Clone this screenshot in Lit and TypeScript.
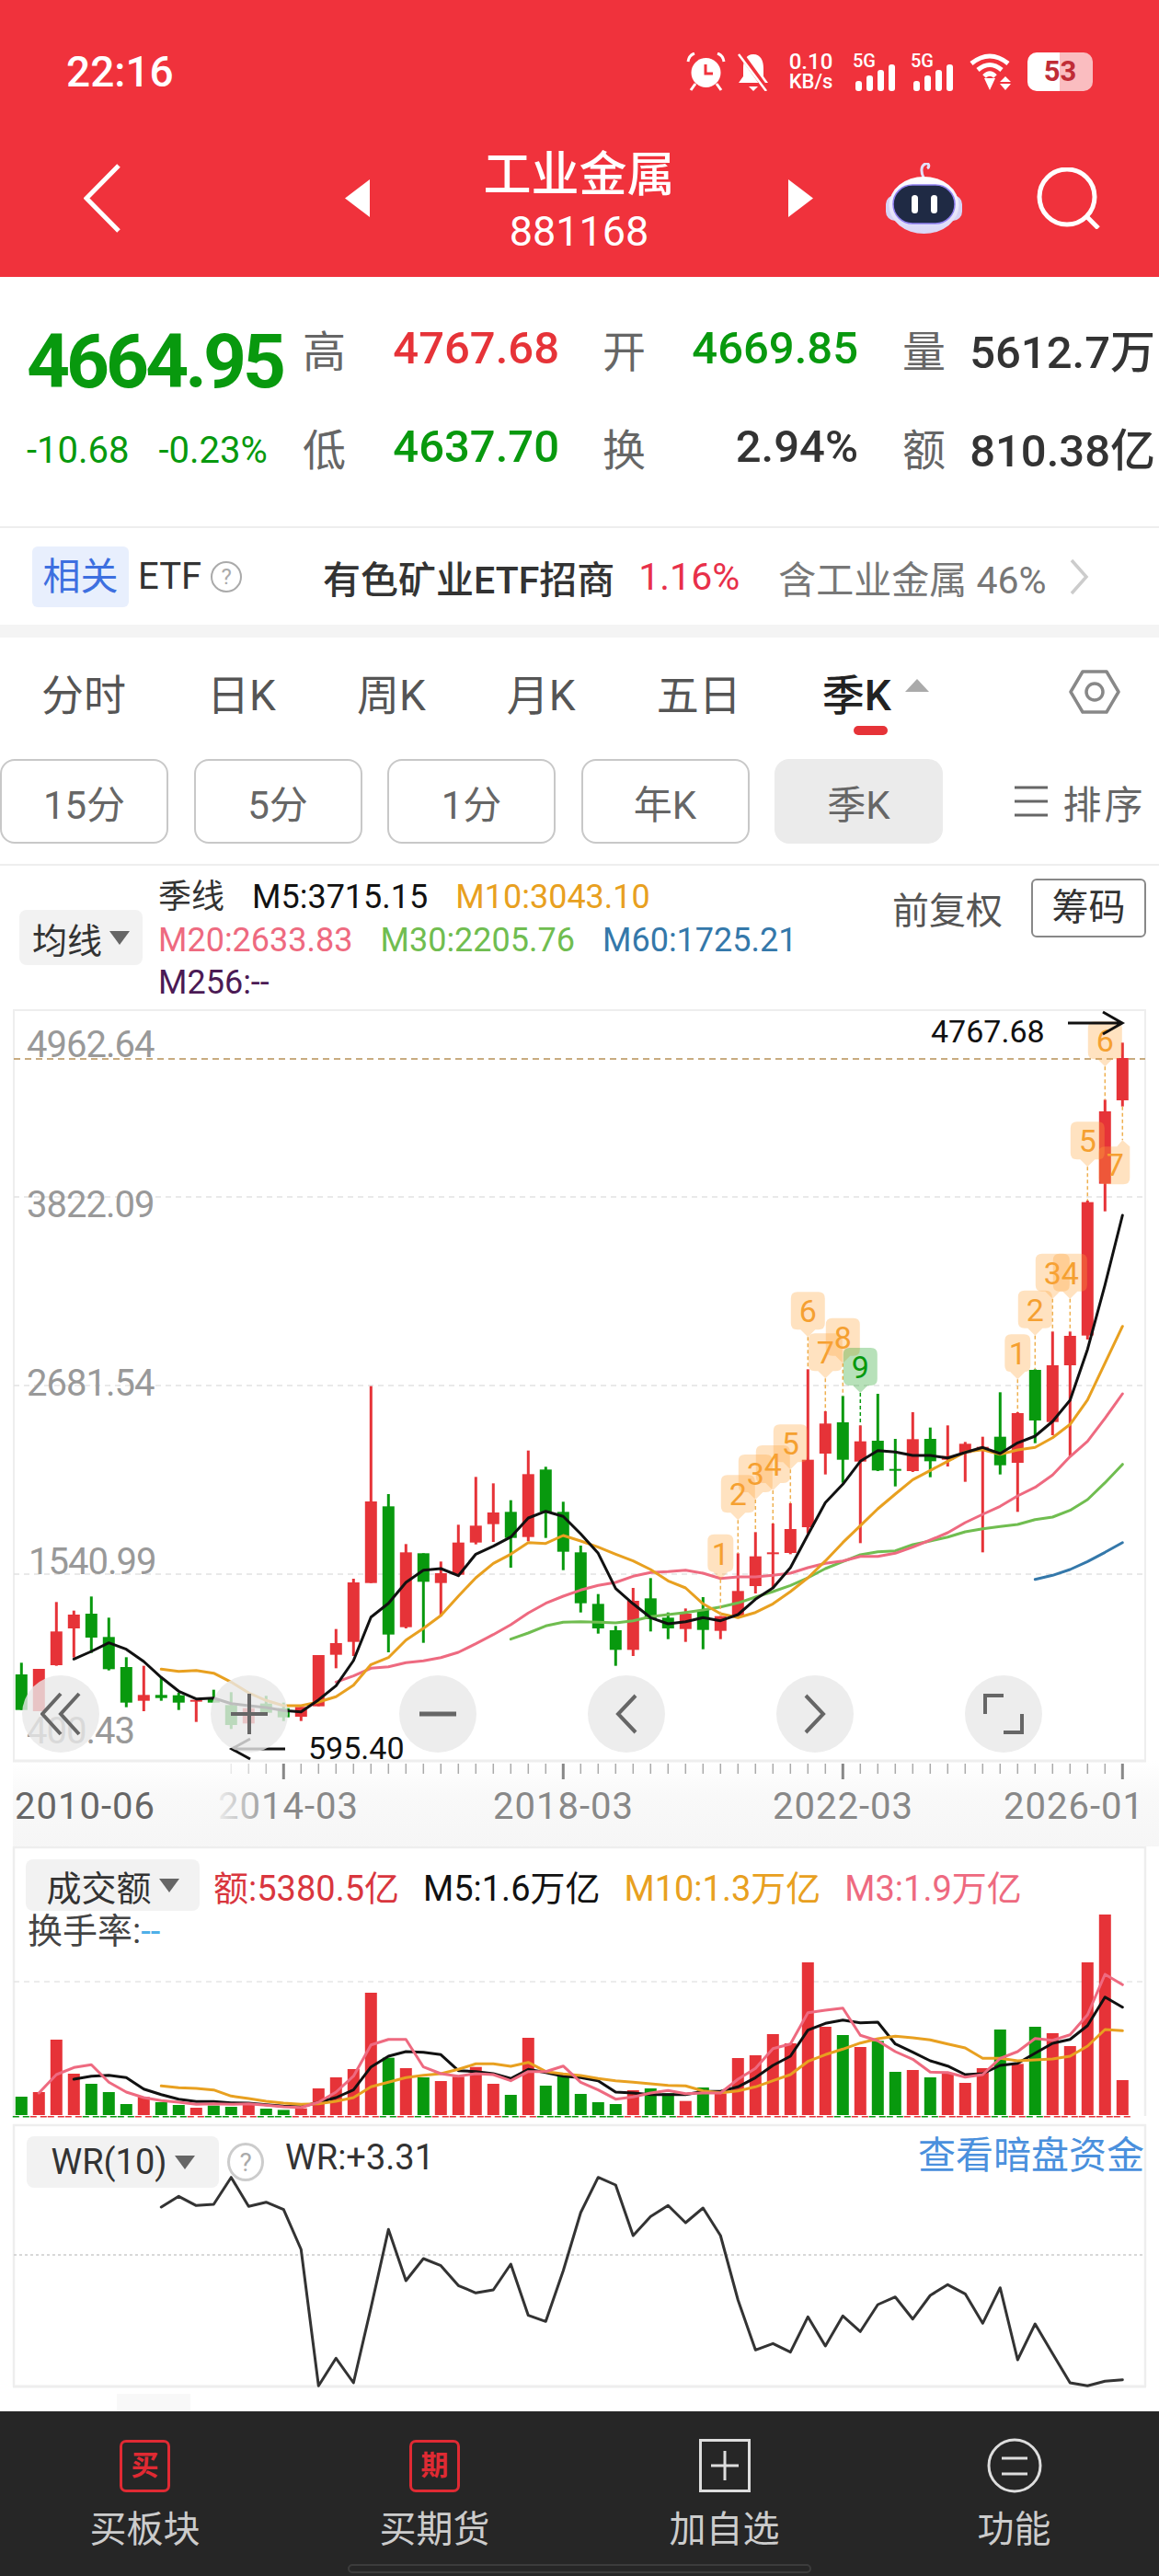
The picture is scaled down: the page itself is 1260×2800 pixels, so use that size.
import {LitElement, html, svg, css} from 'lit';
import {customElement} from 'lit/decorators.js';

const RED = '#e63338';
const GREEN = '#08990e';
const ORANGE = '#e8a020';
const PINK = '#ee6a80';
const LIME = '#70bd50';
const BLUE = '#3478aa';

// bar centres in the chart, one per quarter
const bx = (i: number) => 23.3 + 19 * i;
// price panel, volume panel and WR panel have their own vertical scales
const py = (v: number) => 1580 + v / 3;
const vy = (v: number) => 2000 + v / 3;
const wy = (v: number) => 2300 + v / 3;

// [high, body top, body bottom, low, rising]
const candles = [
  [682, 720, 836, 836, 0], [702, 702, 840, 840, 1], [484, 580, 690, 692, 1], [512, 525, 570, 665, 1],
  [466, 522, 600, 650, 0], [535, 598, 703, 707, 0], [664, 696, 812, 827, 0], [692, 787, 806, 840, 1],
  [730, 787, 797, 806, 0], [780, 788, 812, 836, 0], [803, 803, 808, 875, 1], [770, 800, 812, 812, 0],
  [778, 820, 885, 898, 0], [800, 830, 880, 900, 1], [790, 815, 845, 855, 0], [812, 830, 860, 872, 0],
  [826, 826, 858, 872, 1], [657, 657, 824, 824, 1], [572, 618, 656, 700, 1], [408, 420, 614, 660, 1],
  [-220, 156, 422, 422, 1], [132, 172, 590, 648, 0], [295, 322, 566, 570, 1], [325, 325, 418, 617, 0],
  [352, 390, 422, 530, 1], [232, 290, 395, 400, 1], [76, 235, 290, 296, 1], [97, 192, 230, 288, 1],
  [152, 190, 275, 372, 0], [-10, 67, 272, 286, 1], [43, 52, 190, 275, 0], [157, 190, 320, 380, 0],
  [300, 322, 488, 518, 0], [458, 490, 570, 587, 0], [562, 576, 640, 692, 0], [438, 480, 640, 660, 1],
  [406, 472, 540, 580, 0], [518, 535, 570, 605, 0], [505, 522, 572, 614, 1], [468, 510, 575, 638, 0],
  [530, 530, 578, 605, 1], [325, 448, 530, 530, 1], [256, 335, 432, 456, 1], [228, 322, 326, 440, 1],
  [162, 246, 324, 328, 1], [-275, 20, 240, 260, 1], [-138, -98, 0, 68, 1], [-188, -102, 20, 95, 0],
  [-92, -40, 26, 292, 1], [-195, -42, 55, 57, 0], [-48, 50, 55, 107, 0], [-135, -47, 57, 60, 1],
  [-85, -48, 25, 77, 0], [-92, 8, 20, 42, 1], [-38, -32, -2, 92, 1], [-55, -22, -18, 322, 1],
  [-200, -55, 38, 68, 0], [-135, -132, 30, 190, 1], [-275, -273, -108, -34, 0], [-398, -288, -103, -60, 1],
  [-398, -384, -288, 8, 1], [-825, -820, -385, -372, 1], [-1154, -1116, -880, -790, 1], [-1340, -1290, -1152, -1132, 1],
];

const m5 = [670, 645, 617, 638, 678, 730, 775, 800, 797, 815, 822, 828, 838, 842, 803, 757, 675, 533, 488, 420, 380, 375, 398, 328, 302, 272, 210, 188, 205, 262, 325, 440, 490, 535, 555, 548, 535, 545, 525, 475, 438, 372, 265, 160, 100, 25, -10, -5, 6, 6, 14, -4, -20, 0, -35, -57, -105, -174, -340, -550, -777];
const m10 = [703, 710, 707, 716, 745, 780, 805, 822, 822, 810, 793, 755, 688, 665, 608, 570, 528, 465, 405, 358, 328, 290, 293, 267, 285, 305, 328, 350, 378, 415, 438, 490, 522, 535, 518, 490, 450, 405, 350, 290, 235, 180, 132, 85, 55, 25, -5, -13, 2, -12, -20, -52, -95, -175, -295, -415];
const m20 = [745, 725, 700, 695, 682, 676, 665, 648, 620, 590, 558, 520, 488, 465, 445, 430, 420, 400, 388, 385, 380, 390, 407, 402, 402, 397, 390, 372, 358, 350, 335, 335, 325, 305, 282, 258, 225, 198, 172, 138, 110, 70, 10, -40, -115, -195];
const m30 = [605, 585, 562, 550, 548, 550, 552, 545, 532, 525, 518, 510, 500, 487, 468, 450, 430, 405, 375, 352, 330, 320, 317, 297, 285, 272, 255, 245, 238, 231, 215, 207, 185, 150, 95, 35];
const m60 = [410, 397, 378, 352, 322, 290];

const volumes = [837, 822, 651, 762, 795, 822, 861, 838, 855, 864, 873, 866, 870, 860, 876, 880, 875, 810, 774, 747, 498, 710, 744, 774, 786, 772, 740, 795, 831, 645, 801, 770, 828, 855, 861, 816, 810, 826, 851, 807, 826, 711, 702, 633, 663, 399, 609, 636, 675, 655, 756, 750, 774, 762, 792, 744, 618, 730, 609, 630, 672, 399, 243, 783];
const volM5 = [780, 770, 767, 775, 812, 830, 845, 853, 853, 857, 858, 863, 868, 870, 855, 840, 815, 740, 705, 690, 692, 700, 752, 755, 762, 778, 748, 758, 770, 775, 785, 822, 825, 830, 830, 830, 820, 820, 805, 775, 735, 705, 620, 598, 587, 596, 594, 665, 692, 720, 737, 765, 762, 735, 728, 695, 663, 650, 605, 512, 545];
const volM10 = [802, 808, 810, 815, 835, 843, 852, 858, 862, 860, 852, 840, 805, 790, 775, 767, 762, 748, 730, 730, 738, 725, 755, 763, 768, 778, 785, 790, 795, 800, 802, 818, 824, 818, 805, 785, 765, 722, 700, 682, 662, 648, 640, 645, 652, 665, 678, 712, 712, 720, 717, 714, 705, 672, 618, 622];
const volM3 = [825, 765, 742, 733, 790, 822, 840, 850, 855, 862, 860, 862, 860, 865, 870, 872, 855, 822, 770, 668, 650, 650, 740, 762, 770, 762, 765, 785, 755, 755, 737, 790, 815, 845, 838, 825, 817, 827, 825, 825, 780, 745, 680, 665, 563, 555, 548, 637, 655, 690, 715, 757, 758, 773, 765, 712, 690, 647, 653, 635, 570, 438, 472];
const wr = [297, 262, 292, 288, 200, 295, 281, 305, 435, 880, 790, 870, 625, 370, 537, 465, 488, 553, 577, 567, 483, 650, 670, 505, 315, 200, 225, 390, 328, 292, 348, 300, 390, 600, 763, 742, 770, 655, 750, 652, 703, 615, 590, 662, 585, 550, 580, 676, 560, 795, 678, 775, 870, 880, 865, 860];

// [bar, digit, tip of the pointer, colour class]
const tags: [number, string, number, string][] = [
  [40, '1', 410, 'o'], [41, '2', 217, 'o'], [42, '3', 150, 'o'], [43, '4', 120, 'o'], [44, '5', 52, 'o'],
  [45, '6', -380, 'o'], [46, '7', -245, 'o'], [47, '8', -295, 'o'], [48, '9', -198, 'g'],
  [57, '1', -242, 'o'], [58, '2', -385, 'o'], [59, '3', -505, 'o'], [60, '4', -505, 'o'],
  [61, '5', -935, 'o'], [62, '6', -1262, 'o'],
];

const line = (data: number[], start: number, scale: (v: number) => number, color: string, w = 3) => svg`
  <polyline points=${data.map((v, k) => `${bx(start + k)},${scale(v).toFixed(1)}`).join(' ')}
    fill="none" stroke=${color} stroke-width=${w} stroke-linejoin="round" stroke-linecap="round"></polyline>`;

const tagShape = (cx: number, tip: number, w: number, up = false) => {
  const l = cx - w / 2, r = cx + w / 2, c = 7;
  if (up) {
    const t = tip + 7, b = t + 41;
    return `M${cx + 9} ${tip} L${r} ${t} V${b - c} Q${r} ${b} ${r - c} ${b} H${l + c} Q${l} ${b} ${l} ${b - c} V${t + c} Q${l} ${t} ${l + c} ${t} H${cx + 3} Z`;
  }
  const b = tip - 8, t = b - 41;
  return `M${l + c} ${t} H${r - c} Q${r} ${t} ${r} ${t + c} V${b - c} Q${r} ${b} ${r - c} ${b} H${cx + 8} L${cx} ${tip} L${cx - 8} ${b} H${l + c} Q${l} ${b} ${l} ${b - c} V${t + c} Q${l} ${t} ${l + c} ${t} Z`;
};

@customElement('app-root')
export class AppRoot extends LitElement {
  static override styles = css`
    :host {
      display: block;
      width: 1260px;
      background: #fff;
      font-family: Roboto, "Noto Sans CJK SC", sans-serif;
      color: #333;
    }
    svg { display: block; }
    .header { background: #f0323c; height: 301px; color: #fff; }
    .status { height: 156px; display: flex; align-items: center; padding: 0 72px; }
    .time { font-size: 46px; font-weight: 500; }
    .status-icons { margin-left: auto; display: flex; align-items: center; height: 42px; }
    .bell { margin-left: 12px; }
    .speed { width: 49px; margin: 0 21px 0 20px; font-size: 22px; line-height: 21px; font-weight: 500; text-align: center; white-space: nowrap; }
    .speed div:first-child { font-size: 24px; }
    .sig-gap { width: 14px; }
    .wifi { margin-left: 14px; }
    .sig-text { font: 500 20px Roboto, sans-serif; fill: #fff; }
    .battery {
      width: 71px; height: 42px; border-radius: 10px; margin-left: 12px;
      background: linear-gradient(90deg, #fff 50%, rgba(255, 255, 255, .68) 50%);
      color: #c02c36; font-size: 31px; font-weight: 700; text-align: center; line-height: 42px;
    }
    .nav { height: 145px; padding-bottom: 26px; box-sizing: border-box; display: flex; align-items: center; }
    .back { margin-left: 91px; }
    .prev { margin-left: 244px; }
    .robot { margin-left: 79px; }
    .search { margin-left: 81px; }
    .title { width: 455px; text-align: center; margin-top: 6px; }
    .title b { display: block; font-size: 52px; font-weight: 500; line-height: 66px; }
    .title span { display: block; font-size: 45px; line-height: 56px; }

    .quote { height: 273px; box-sizing: border-box; border-bottom: 2px solid #eee; display: flex; padding-top: 24px; }
    .price { width: 329px; padding: 15px 0 0 29px; box-sizing: border-box; color: #08990e; }
    .last { font-size: 82px; font-weight: 700; letter-spacing: -4px; line-height: 106px; white-space: nowrap; }
    .change { display: flex; gap: 32px; font-size: 40px; line-height: 88px; white-space: nowrap; }
    .stats {
      display: grid; grid-template-columns: 47px 232px 94px 231px 95px 228px; grid-auto-rows: 107px;
      align-items: center; font-size: 49px; font-weight: 500; white-space: nowrap;
    }
    .stats .k { color: #666; font-size: 47px; font-weight: 400; text-align: right; }
    .stats .v { text-align: right; }
    .up { color: #e63338; }
    .down { color: #08990e; }

    .etf { height: 105px; display: flex; align-items: center; padding-left: 35px; font-size: 41px; white-space: nowrap; }
    .etf-badge { width: 105px; height: 66px; line-height: 66px; text-align: center; background: #e8effd; border-radius: 6px; color: #3d6fe0; }
    .etf-name { margin-left: 10px; font-size: 40px; }
    .help {
      width: 34px; height: 34px; border: 2px solid #aaa; border-radius: 50%; box-sizing: border-box;
      color: #aaa; font-size: 24px; line-height: 30px; text-align: center;
    }
    .etf .help { margin: 0 88px 0 10px; }
    .etf-fund { color: #333; font-weight: 500; }
    .etf-pct { margin-left: 26px; color: #e8304a; }
    .etf-own { margin-left: 42px; color: #777; }
    .etf svg { margin-left: 24px; }
    .gap { height: 14px; background: #f4f4f4; }

    .tabs { height: 132px; padding: 0 0 14px 45px; box-sizing: border-box; display: flex; align-items: center; gap: 88px; font-size: 46px; color: #555; }
    .tab-on { position: relative; color: #222; font-weight: 500; }
    .tab-on::after { content: ""; position: absolute; left: 34px; right: 4px; bottom: -14px; height: 10px; border-radius: 5px; background: #e63338; }
    .tab-arrow { position: absolute; left: 90px; top: 19px; border: 13px solid transparent; border-top: 0; border-bottom: 14px solid #aaa; }
    .tabs svg { margin-left: auto; margin-right: 42px; }

    .ranges { height: 114px; display: flex; gap: 27.5px; font-size: 42px; color: #666; }
    .range { width: 183px; height: 92px; box-sizing: border-box; border: 2px solid #c8c8c8; border-radius: 16px; display: flex; align-items: center; justify-content: center; }
    .range.on { background: #ebebeb; border-color: #ebebeb; }
    .sort { margin-left: 49px; height: 92px; display: flex; align-items: center; gap: 16px; letter-spacing: 3px; }

    .toolbar { height: 158px; box-sizing: border-box; border-top: 2px solid #eee; display: flex; padding-left: 21px; position: relative; }
    .pick { background: #f2f2f2; border-radius: 8px; display: flex; align-items: center; justify-content: center; gap: 8px; box-sizing: border-box; color: #333; font-size: 38px; white-space: nowrap; }
    .caret { width: 0; height: 0; border: 11px solid transparent; border-top: 15px solid #666; border-bottom: 0; }
    .toolbar .pick { width: 134px; height: 60px; align-self: center; }
    .legend { margin: 11px 0 0 17px; font-size: 36px; line-height: 46.5px; white-space: nowrap; }
    .legend div { display: flex; gap: 30px; }
    .adj { margin: 14px 14px 0 auto; height: 64px; display: flex; align-items: center; gap: 31px; font-size: 40px; color: #555; }
    .chips { width: 125px; height: 64px; box-sizing: border-box; border: 2px solid #888; border-radius: 6px; text-align: center; line-height: 60px; color: #333; }
    .c-title { color: #333; }
    .c-black { color: #111; }
    .c-orange { color: #e8a020; }
    .c-pink { color: #ee6a80; }
    .c-lime { color: #70bd50; }
    .c-blue { color: #3478aa; }
    .c-purple { color: #4b1a55; }
    .c-red { color: #d9363e; }

    .panel { position: relative; }
    .buttons { position: absolute; left: 24px; top: 724px; display: flex; gap: 121px; }
    .btn { width: 84px; height: 84px; border-radius: 50%; background: rgba(232, 232, 232, .8); display: flex; align-items: center; justify-content: center; }
    .axis { font-size: 40px; fill: #999; letter-spacing: -1px; }
    .mark { font-size: 34px; fill: #111; }
    .tag { font-size: 34px; text-anchor: middle; }
    .date { font-size: 40px; letter-spacing: 1px; fill: #888; }
    .date.first { fill: #666; }
    .date.faded { fill: url(#fade); }

    .vol-legend { position: absolute; left: 28px; top: 14px; font-size: 38px; white-space: nowrap; }
    .vol-row { display: flex; align-items: center; gap: 26px; height: 56px; }
    .vol-row .pick { width: 189px; height: 56px; margin-right: -11px; }
    .turnover { margin: 0 0 0 2px; line-height: 44px; color: #444; }
    .turnover span { color: #4fb0e8; }
    .wr-legend { position: absolute; left: 29px; right: 16px; top: 22px; display: flex; align-items: flex-start; font-size: 38px; white-space: nowrap; }
    .wr-legend .pick { width: 209px; height: 56px; }
    .wr-legend .help { width: 40px; height: 42px; margin: 7px 23px 0 9px; font-size: 28px; line-height: 38px; background: #fff; border-width: 3px; border-color: #ccc; }
    .wr-value { line-height: 46px; color: #333; }
    .wr-link { margin-left: auto; color: #4a90dd; font-size: 41px; line-height: 42px; }

    .bottom { height: 179px; background: #262626; display: grid; grid-template-columns: repeat(4, 315px); position: relative; color: #ccc; }
    .item { display: flex; flex-direction: column; align-items: center; padding-top: 28px; box-sizing: border-box; font-size: 40px; line-height: 56px; }
    .item-icon { width: 60px; height: 62px; margin-bottom: 11px; display: flex; align-items: center; justify-content: center; }
    .buy { width: 55px; height: 57px; box-sizing: border-box; border: 3px solid #e02a33; border-radius: 7px; color: #e02a33; font-size: 30px; font-weight: 700; line-height: 50px; text-align: center; }
    .home { position: absolute; left: 378px; top: 166px; width: 504px; height: 10px; box-sizing: border-box; border: 2px solid #3c3c3c; border-radius: 5px; }
  `;

  private candleBars() {
    return candles.map((c, i) => {
      const [hi, top, bot, lo, rise] = c;
      const col = rise ? RED : GREEN;
      const x = bx(i);
      return svg`
        <rect x=${x - 1.5} y=${py(hi)} width="3" height=${(lo - hi) / 3} fill=${col}></rect>
        <rect x=${x - 6.5} y=${py(top)} width="13" height=${Math.max(2, (bot - top) / 3)} fill=${col}></rect>`;
    });
  }

  private tagMarks() {
    const marks = tags.map(([i, d, tip, kind]) => {
      const x = bx(i), w = d === '1' ? 28 : 37;
      const t = py(tip);
      const col = kind === 'g' ? GREEN : '#f5a030';
      return svg`
        <line x1=${x} x2=${x} y1=${t} y2=${py(candles[i][0])} stroke=${kind === 'g' ? GREEN : '#eeb050'} stroke-width="1.5" stroke-dasharray="4 3"></line>
        <path d=${tagShape(x, t, w)} fill=${kind === 'g' ? 'rgba(16,155,24,.3)' : 'rgba(255,165,60,.32)'}></path>
        <text class="tag" x=${x} y=${t - 16} fill=${col}>${d}</text>`;
    });
    // the last one sits under its bar and points upwards
    const x = bx(63), tip = py(-1022);
    return svg`${marks}
      <line x1=${x} x2=${x} y1=${py(-1132)} y2=${tip} stroke="#eeb050" stroke-width="1.5" stroke-dasharray="4 3"></line>
      <path d=${tagShape(x - 9, tip, 34, true)} fill="rgba(255,165,60,.32)"></path>
      <text class="tag" x=${x - 8} y=${tip + 39} fill="#f5a030">7</text>`;
  }

  private mainChart() {
    const ticks = [];
    for (let i = 12; i < 64; i++) {
      const major = (i + 1) % 16 === 0;
      ticks.push(svg`<rect x=${bx(i) - (major ? 1.5 : 0.75)} y="1917" width=${major ? 3 : 1.5} height=${major ? 17 : 11}
        fill=${major ? '#888' : '#aaa'} opacity=${Math.min(1, (i - 11) / 4)}></rect>`);
    }
    return html`
      <svg width="1260" height="910" viewBox="0 1097 1260 910">
        <defs>
          <linearGradient id="band" x1="0" x2="0" y1="0" y2="1">
            <stop offset="0" stop-color="#fff"></stop><stop offset=".4" stop-color="#f9f9f9"></stop><stop offset="1" stop-color="#f6f6f6"></stop>
          </linearGradient>
          <linearGradient id="fade" gradientUnits="userSpaceOnUse" x1="237" x2="300" y1="0" y2="0">
            <stop offset="0" stop-color="#888" stop-opacity=".1"></stop><stop offset="1" stop-color="#888"></stop>
          </linearGradient>
        </defs>
        <rect x="14" y="1914" width="1246" height="93" fill="url(#band)"></rect>
        <path d="M15 1915V1098H1245V1915" fill="none" stroke="#eee" stroke-width="2"></path>
        <path d="M14 1914H1246" stroke="#eee" stroke-width="3"></path>
        ${[1301, 1506, 1711].map(y => svg`<line x1="15" x2="1245" y1=${y} y2=${y} stroke="#e2e2e2" stroke-width="1.5" stroke-dasharray="6 5"></line>`)}
        <line x1="15" x2="1245" y1="1151" y2="1151" stroke="#c8ab80" stroke-width="2" stroke-dasharray="7 5"></line>
        <text class="axis" x="29" y="1149">4962.64</text>
        <text class="axis" x="29" y="1323">3822.09</text>
        <text class="axis" x="29" y="1517">2681.54</text>
        <text class="axis" x="31" y="1711">1540.99</text>
        <text class="axis" x="29" y="1895">400.43</text>
        ${this.candleBars()}
        ${line(m60, 58, py, BLUE)}
        ${line(m30, 28, py, LIME)}
        ${line(m20, 18, py, PINK)}
        ${line(m10, 8, py, ORANGE)}
        ${line(m5, 3, py, '#111')}
        ${this.tagMarks()}
        <text class="mark" x="1012" y="1133">4767.68</text>
        <path d="M1161 1112H1220M1199 1100L1220 1112L1199 1124" fill="none" stroke="#111" stroke-width="3"></path>
        <text class="mark" x="335" y="1912">595.40</text>
        <path d="M310 1901H252M272 1890L252 1901L272 1912" fill="none" stroke="#111" stroke-width="3"></path>
        ${ticks}
        <text class="date first" x="16" y="1977">2010-06</text>
        <text class="date faded" x="237" y="1977">2014-03</text>
        <text class="date" x="536" y="1977">2018-03</text>
        <text class="date" x="840" y="1977">2022-03</text>
        <text class="date" x="1091" y="1977">2026-01</text>
      </svg>`;
  }

  private volumeChart() {
    return html`
      <svg width="1260" height="293" viewBox="0 2007 1260 293">
        <path d="M15 2300V2008H1245V2300" fill="none" stroke="#eee" stroke-width="2.5"></path>
        <line x1="15" x2="1245" y1="2154" y2="2154" stroke="#e6e6e6" stroke-width="1.5" stroke-dasharray="6 5"></line>
        ${volumes.map((v, i) => svg`<rect x=${bx(i) - 6.5} y=${vy(v)} width="13" height=${2299 - vy(v)} fill=${candles[i][4] ? RED : GREEN}></rect>`)}
        ${line(volM5, 3, vy, '#111')}
        ${line(volM10, 8, vy, ORANGE)}
        ${line(volM3, 1, vy, PINK)}
      </svg>`;
  }

  private wrChart() {
    return html`
      <svg width="1260" height="321" viewBox="0 2300 1260 321">
        ${candles.map((c, i) => svg`<line x1=${bx(i) - 9.5} x2=${bx(i) + 9.5} y1="2300.5" y2="2300.5" stroke=${c[4] ? RED : GREEN} stroke-width="2" stroke-dasharray="7 4"></line>`)}
        <path d="M15 2594V2310H1245V2594" fill="none" stroke="#eee" stroke-width="2.5"></path>
        <path d="M14 2594H1246" stroke="#eee" stroke-width="3"></path>
        <line x1="15" x2="1245" y1="2451" y2="2451" stroke="#ccc" stroke-width="1.5" stroke-dasharray="3 3"></line>
        ${line(wr, 8, wy, '#333')}
        <rect x="127" y="2602" width="80" height="19" fill="#f8f8f8"></rect>
      </svg>`;
  }

  private statusIcons() {
    return html`
      <svg width="43" height="42" viewBox="0 0 43 42">
        <circle cx="21.5" cy="22" r="16" fill="#fff"></circle>
        <path d="M21 13V23H29" fill="none" stroke="#f0323c" stroke-width="3"></path>
        <path d="M2 10Q3 3 9 1M41 10Q40 3 34 1" fill="none" stroke="#fff" stroke-width="3"></path>
        <path d="M10 34L5 41M33 34L38 41" stroke="#fff" stroke-width="3"></path>
      </svg>
      <svg class="bell" width="36" height="42" viewBox="0 0 36 42">
        <path d="M18 2C10 2 7 9 7 17V26L2 33H34L29 26V17C29 9 26 2 18 2Z" fill="#fff"></path>
        <path d="M13 37H23L18 42Z" fill="#fff"></path>
        <path d="M4 1L33 41" stroke="#f0323c" stroke-width="6"></path>
        <path d="M2 2L32 42" stroke="#fff" stroke-width="2.5"></path>
      </svg>
      <div class="speed"><div>0.10</div><div>KB/s</div></div>
      ${this.signal()}
      <span class="sig-gap"></span>
      ${this.signal()}
      <svg class="wifi" width="52" height="42" viewBox="0 0 52 42">
        <path d="M3 12Q23 -4 43 12M10 19Q23 8 36 19M17 26Q23 20 29 26" fill="none" stroke="#fff" stroke-width="5"></path>
        <path d="M17 28H29L23 41Z" fill="#fff"></path>
        <path d="M40 26L46 32H34ZM34 34H46L40 41Z" fill="#fff"></path>
      </svg>
      <div class="battery">53</div>`;
  }

  private signal() {
    return html`
      <svg width="49" height="42" viewBox="0 0 49 42">
        <text class="sig-text" x="0" y="16">5G</text>
        <rect x="3" y="31" width="7" height="11" rx="3" fill="#fff"></rect>
        <rect x="15" y="25" width="7" height="17" rx="3" fill="#fff"></rect>
        <rect x="27" y="19" width="7" height="23" rx="3" fill="#fff"></rect>
        <rect x="39" y="13" width="7" height="29" rx="3" fill="#fff"></rect>
      </svg>`;
  }

  private robot() {
    return html`
      <svg class="robot" width="83" height="77" viewBox="0 0 83 77">
        <defs>
          <linearGradient id="shell" x1="0" x2="0" y1="0" y2="1">
            <stop offset="0" stop-color="#fff"></stop><stop offset="1" stop-color="#d9d6f7"></stop>
          </linearGradient>
        </defs>
        <path d="M41 16C38 10 38 3 43 1C47 0 48 4 45 6" fill="none" stroke="#e3e0fa" stroke-width="3"></path>
        <rect x="0" y="35" width="83" height="28" rx="10" fill="#d6d3f5"></rect>
        <ellipse cx="41.500" cy="46" rx="38" ry="31" fill="url(#shell)"></ellipse>
        <rect x="8" y="24" width="67" height="42" rx="21" fill="#1f2a44" stroke="#8f7ff0" stroke-width="1.5"></rect>
        <rect x="28" y="35" width="7" height="20" rx="3.500" fill="#fff"></rect>
        <rect x="49" y="35" width="7" height="20" rx="3.500" fill="#fff"></rect>
      </svg>`;
  }

  override render() {
    return html`
      <div class="header">
        <div class="status">
          <div class="time">22:16</div>
          <div class="status-icons">${this.statusIcons()}</div>
        </div>
        <div class="nav">
          <svg class="back" width="40" height="75" viewBox="0 0 40 75"><path d="M38 2L3 37.500L38 73" fill="none" stroke="#fff" stroke-width="5"></path></svg>
          <svg class="prev" width="27" height="41" viewBox="0 0 27 41"><path d="M27 0V41L0 20.500Z" fill="#fff"></path></svg>
          <div class="title"><b>工业金属</b><span>881168</span></div>
          <svg width="27" height="41" viewBox="0 0 27 41"><path d="M0 0V41L27 20.500Z" fill="#fff"></path></svg>
          ${this.robot()}
          <svg class="search" width="69" height="67" viewBox="0 0 69 67">
            <circle cx="33" cy="32" r="30" fill="none" stroke="#fff" stroke-width="5"></circle>
            <path d="M54 53L67 66" stroke="#fff" stroke-width="5"></path>
          </svg>
        </div>
      </div>

      <div class="quote">
        <div class="price">
          <div class="last">4664.95</div>
          <div class="change"><span>-10.68</span><span>-0.23%</span></div>
        </div>
        <div class="stats">
          <div class="k">高</div><div class="v up">4767.68</div>
          <div class="k">开</div><div class="v down">4669.85</div>
          <div class="k">量</div><div class="v">5612.7万</div>
          <div class="k">低</div><div class="v down">4637.70</div>
          <div class="k">换</div><div class="v">2.94%</div>
          <div class="k">额</div><div class="v">810.38亿</div>
        </div>
      </div>

      <div class="etf">
        <div class="etf-badge">相关</div>
        <div class="etf-name">ETF</div>
        <div class="help">?</div>
        <div class="etf-fund">有色矿业ETF招商</div>
        <div class="etf-pct">1.16%</div>
        <div class="etf-own">含工业金属 46%</div>
        <svg width="22" height="40" viewBox="0 0 22 40"><path d="M3 2L19 20L3 38" fill="none" stroke="#ccc" stroke-width="3.500"></path></svg>
      </div>
      <div class="gap"></div>

      <div class="tabs">
        <span>分时</span><span>日K</span><span>周K</span><span>月K</span><span>五日</span>
        <span class="tab-on">季K<i class="tab-arrow"></i></span>
        <svg width="56" height="50" viewBox="0 0 56 50">
          <path d="M15 3H41L54 25L41 47H15L2 25Z" fill="none" stroke="#888" stroke-width="3.500" stroke-linejoin="round"></path>
          <circle cx="28" cy="25" r="9" fill="none" stroke="#888" stroke-width="3.500"></circle>
        </svg>
      </div>

      <div class="ranges">
        <div class="range">15分</div><div class="range">5分</div><div class="range">1分</div><div class="range">年K</div>
        <div class="range on">季K</div>
        <div class="sort">
          <svg width="38" height="36" viewBox="0 0 38 36"><path d="M1 3H37M1 18H37M1 33H37" stroke="#666" stroke-width="3"></path></svg>
          <span>排序</span>
        </div>
      </div>

      <div class="toolbar">
        <div class="pick">均线<i class="caret"></i></div>
        <div class="legend">
          <div><span class="c-title">季线</span><span class="c-black">M5:3715.15</span><span class="c-orange">M10:3043.10</span></div>
          <div><span class="c-pink">M20:2633.83</span><span class="c-lime">M30:2205.76</span><span class="c-blue">M60:1725.21</span></div>
          <div><span class="c-purple">M256:--</span></div>
        </div>
        <div class="adj"><span>前复权</span><div class="chips">筹码</div></div>
      </div>

      <div class="panel">
        ${this.mainChart()}
        <div class="buttons">
          <div class="btn"><svg width="44" height="50" viewBox="0 0 44 50"><path d="M22 3L2 25L22 47M42 3L22 25L42 47" fill="none" stroke="#666" stroke-width="4"></path></svg></div>
          <div class="btn"><svg width="40" height="44" viewBox="0 0 40 44"><path d="M0 22H40M20 0V44" fill="none" stroke="#666" stroke-width="4"></path></svg></div>
          <div class="btn"><svg width="40" height="6" viewBox="0 0 40 6"><path d="M0 3H40" stroke="#666" stroke-width="5"></path></svg></div>
          <div class="btn"><svg width="24" height="44" viewBox="0 0 24 44"><path d="M22 2L3 22L22 42" fill="none" stroke="#666" stroke-width="4"></path></svg></div>
          <div class="btn"><svg width="24" height="44" viewBox="0 0 24 44"><path d="M2 2L21 22L2 42" fill="none" stroke="#666" stroke-width="4"></path></svg></div>
          <div class="btn"><svg width="44" height="44" viewBox="0 0 44 44"><path d="M22 2H2V22M22 42H42V22" fill="none" stroke="#666" stroke-width="4"></path></svg></div>
        </div>
      </div>

      <div class="panel">
        ${this.volumeChart()}
        <div class="vol-legend">
          <div class="vol-row">
            <div class="pick">成交额<i class="caret"></i></div>
            <span class="c-red">额:5380.5亿</span>
            <span class="c-black">M5:1.6万亿</span>
            <span class="c-orange">M10:1.3万亿</span>
            <span class="c-pink">M3:1.9万亿</span>
          </div>
          <div class="turnover">换手率:<span>--</span></div>
        </div>
      </div>

      <div class="panel">
        ${this.wrChart()}
        <div class="wr-legend">
          <div class="pick">WR(10)<i class="caret"></i></div>
          <div class="help">?</div>
          <div class="wr-value">WR:+3.31</div>
          <div class="wr-link">查看暗盘资金</div>
        </div>
      </div>

      <div class="bottom">
        <div class="item"><div class="item-icon"><div class="buy">买</div></div>买板块</div>
        <div class="item"><div class="item-icon"><div class="buy">期</div></div>买期货</div>
        <div class="item">
          <div class="item-icon"><svg width="56" height="58" viewBox="0 0 56 58"><path d="M1.500 1.500H54.500V56.500H1.500Z" fill="none" stroke="#ddd" stroke-width="3"></path><path d="M13 29H43M28 13V45" stroke="#ddd" stroke-width="3"></path></svg></div>
          加自选
        </div>
        <div class="item">
          <div class="item-icon"><svg width="60" height="60" viewBox="0 0 60 60"><circle cx="30" cy="30" r="28" fill="none" stroke="#ddd" stroke-width="3"></circle><path d="M16 22H44M16 39H44" stroke="#ddd" stroke-width="3"></path></svg></div>
          功能
        </div>
        <div class="home"></div>
      </div>
    `;
  }
}

declare global {
  interface HTMLElementTagNameMap {
    'app-root': AppRoot;
  }
}
